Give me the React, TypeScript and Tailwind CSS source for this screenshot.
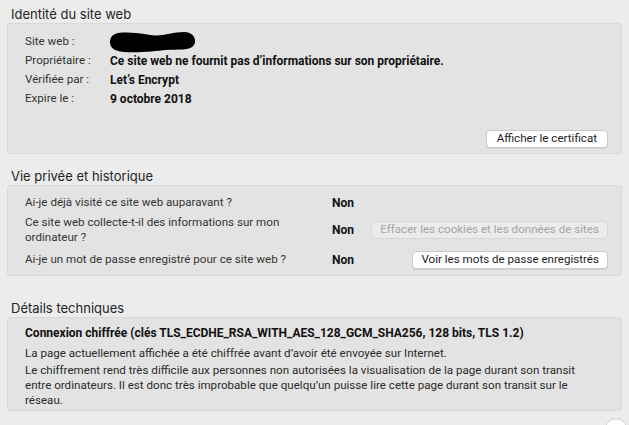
const font = { fontFamily: 'Inter, "Noto Sans", sans-serif' }
const body = { fontFamily: 'Roboto, "Noto Sans", sans-serif' }

function Section({ title, children, className = '' }: { title: string; children: React.ReactNode; className?: string }) {
  return (
    <div className={className}>
      <div className="pl-[11px] h-[23px] pt-[6px] text-[13px] leading-[16px] text-[#242424]">{title}</div>
      <div className="mx-[7px] rounded-[3px] border border-[#d9d9d9] bg-[#e3e3e3]" style={body}>
        {children}
      </div>
    </div>
  )
}

function MacButton({ children, disabled, wide }: { children: React.ReactNode; disabled?: boolean; wide?: boolean }) {
  return (
    <div
      className={`h-[18px] ${wide ? 'px-[10px]' : 'px-[8px]'} flex items-center rounded-[4px] text-[11.6px] leading-none ${
        disabled
          ? 'bg-[#ebebeb] border border-[#d6d6d6] text-[#a5a5a5]'
          : 'bg-white border border-[#c9c9c9] text-[#1e1e1e] shadow-[0_1px_0_rgba(0,0,0,0.08)]'
      }`}
    >
      {children}
    </div>
  )
}

function Redacted() {
  return (
    <svg width="86" height="22" viewBox="0 0 86 22" className="block">
      <path
        d="M8 2 C18 1 30 2 40 4 C52 6 62 1 74 1 C84 1 87 9 84 14 C80 20 68 18 56 19 C46 20 30 22 14 21 C3 20 0 16 0 11 C0 6 3 3 8 2 Z"
        fill="#000"
      />
    </svg>
  )
}

export default function App() {
  const rows: [string, React.ReactNode][] = [
    ['Site web :', <Redacted />],
    ['Propriétaire :', 'Ce site web ne fournit pas d’informations sur son propriétaire.'],
    ['Vérifiée par :', 'Let’s Encrypt'],
    ['Expire le :', '9 octobre 2018'],
  ]

  return (
    <div className="w-[629px] h-[425px] overflow-hidden bg-[#ececec] text-[#262626]" style={font}>
      <Section title="Identité du site web">
        <div className="pt-[8px] pb-[5px] pr-[13px]">
          {rows.map(([label, value], i) => (
            <div key={i} className="flex items-center h-[19px] text-[11.6px]">
              <div className="w-[102px] pl-[17px] text-[#333]">{label}</div>
              <div className="font-bold text-[12px] text-[#111]">{value}</div>
            </div>
          ))}
          <div className="flex justify-end mt-[22px]">
            <MacButton wide>Afficher le certificat</MacButton>
          </div>
        </div>
      </Section>

      <Section title="Vie privée et historique" className="mt-[8px]">
        <div className="pt-[7px] pb-[6px] pr-[13px] text-[11.6px]">
          <div className="flex items-center h-[19px]">
            <div className="w-[324px] pl-[17px] text-[#333]">Ai-je déjà visité ce site web auparavant ?</div>
            <div className="font-bold text-[12px] text-[#111]">Non</div>
          </div>
          <div className="flex items-center mt-[3px]">
            <div className="w-[324px] pl-[17px] text-[#333] leading-[15px]">
              Ce site web collecte-t-il des informations sur mon
              <br />
              ordinateur ?
            </div>
            <div className="font-bold text-[12px] text-[#111]">Non</div>
            <div className="ml-auto">
              <MacButton disabled>Effacer les cookies et les données de sites</MacButton>
            </div>
          </div>
          <div className="flex items-center h-[19px] mt-[5px]">
            <div className="w-[324px] pl-[17px] text-[#333]">Ai-je un mot de passe enregistré pour ce site web ?</div>
            <div className="font-bold text-[12px] text-[#111]">Non</div>
            <div className="ml-auto">
              <MacButton>Voir les mots de passe enregistrés</MacButton>
            </div>
          </div>
        </div>
      </Section>

      <Section title="Détails techniques" className="mt-[18px]">
        <div className="pt-[7px] pb-[2px] pl-[17px] text-[11.6px] leading-[16px] text-[#2a2a2a]">
          <div className="font-bold text-[12px] text-[#111]">
            Connexion chiffrée (clés TLS_ECDHE_RSA_WITH_AES_128_GCM_SHA256, 128 bits, TLS 1.2)
          </div>
          <div className="mt-[4px]">La page actuellement affichée a été chiffrée avant d’avoir été envoyée sur Internet.</div>
          <div className="mt-[2px] leading-[15px]">
            Le chiffrement rend très difficile aux personnes non autorisées la visualisation de la page durant son transit
            <br />
            entre ordinateurs. Il est donc très improbable que quelqu’un puisse lire cette page durant son transit sur le
            <br />
            réseau.
          </div>
        </div>
      </Section>

      <div className="flex justify-end pr-[2px] mt-[7px]">
        <div className="w-[22px] h-[22px] rounded-full bg-white border border-[#cfcfcf]" />
      </div>
    </div>
  )
}
